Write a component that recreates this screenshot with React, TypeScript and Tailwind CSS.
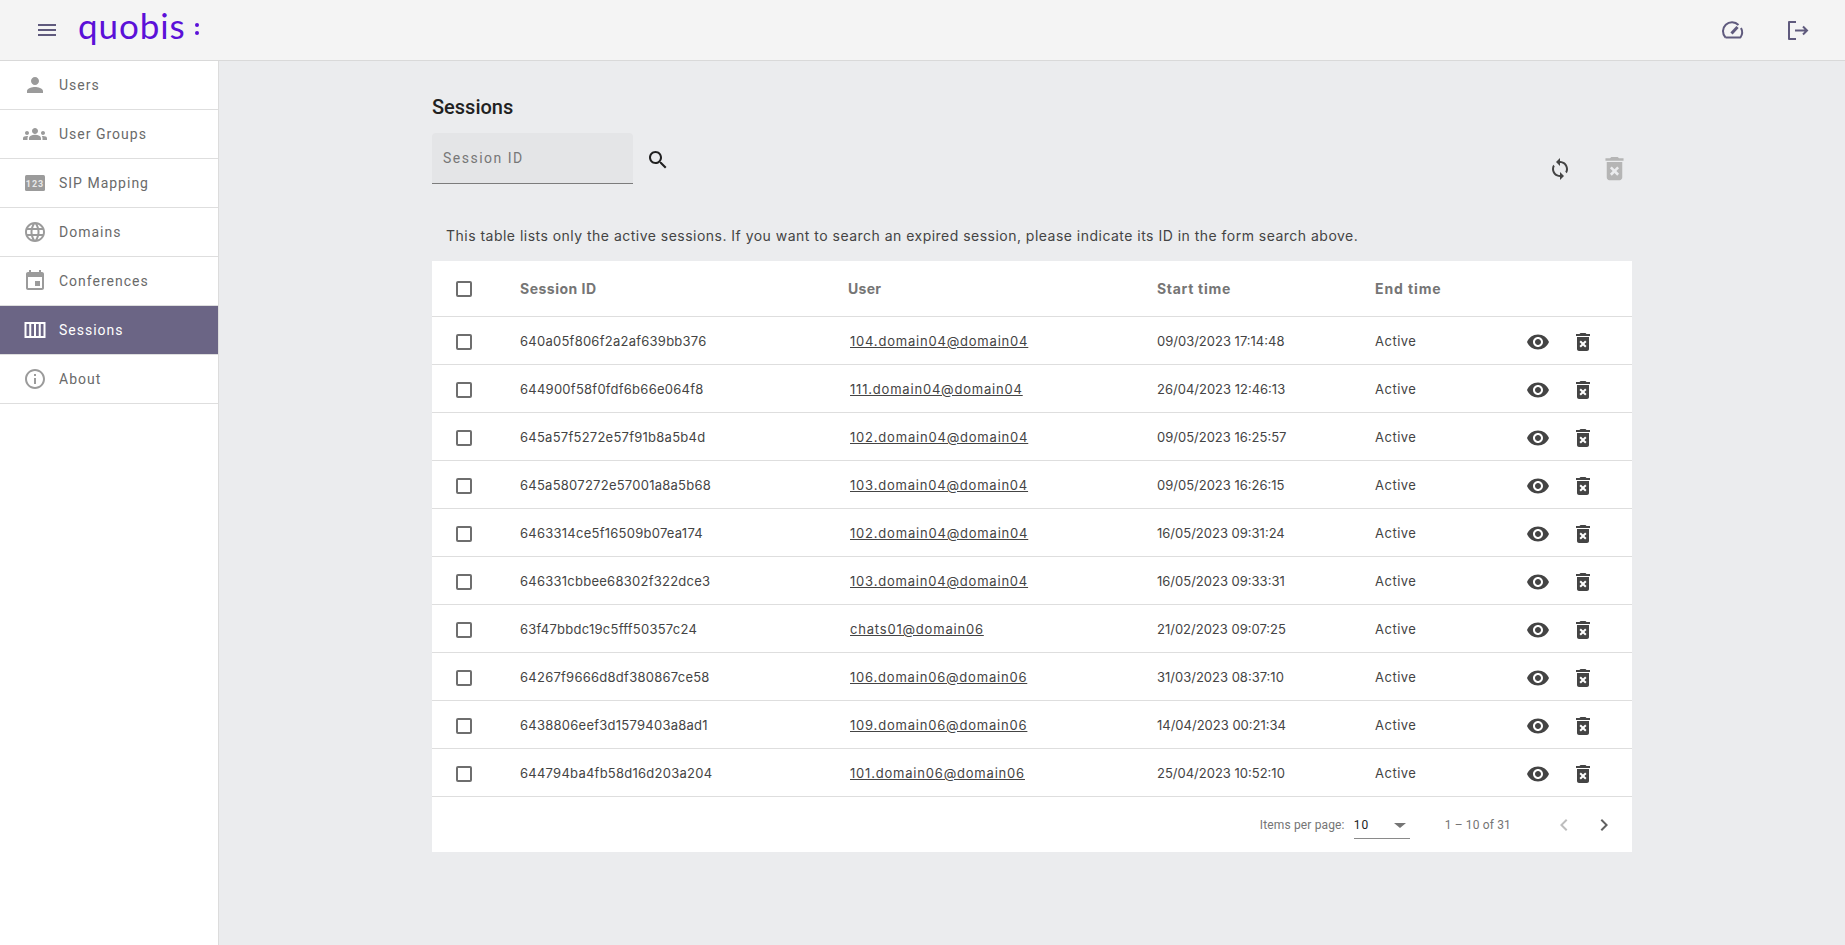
import React from "react";

const P = {
  person: "M12 12c2.21 0 4-1.79 4-4s-1.79-4-4-4-4 1.79-4 4 1.79 4 4 4zm0 2c-2.67 0-8 1.34-8 4v2h16v-2c0-2.66-5.33-4-8-4z",
  groups: "M12 12.75c1.63 0 3.07.39 4.24.9 1.08.48 1.76 1.56 1.76 2.73V18H6v-1.61c0-1.18.68-2.26 1.76-2.73 1.17-.52 2.61-.91 4.24-.91zM4 13c1.1 0 2-.9 2-2s-.9-2-2-2-2 .9-2 2 .9 2 2 2zm1.13 1.1c-.37-.06-.74-.1-1.13-.1-.99 0-1.93.21-2.78.58C.48 14.9 0 15.62 0 16.43V18h4.5v-1.61c0-.83.23-1.61.63-2.29zM20 13c1.1 0 2-.9 2-2s-.9-2-2-2-2 .9-2 2 .9 2 2 2zm4 3.43c0-.81-.48-1.53-1.22-1.85-.85-.37-1.79-.58-2.78-.58-.39 0-.76.04-1.13.1.4.68.63 1.46.63 2.29V18H24v-1.57zM12 6c1.66 0 3 1.34 3 3s-1.34 3-3 3-3-1.34-3-3 1.34-3 3-3z",
  language: "M11.99 2C6.47 2 2 6.48 2 12s4.47 10 9.99 10C17.52 22 22 17.52 22 12S17.52 2 11.99 2zm6.93 6h-2.95c-.32-1.25-.78-2.45-1.38-3.56 1.84.63 3.37 1.91 4.33 3.56zM12 4.04c.83 1.2 1.48 2.53 1.91 3.96h-3.82c.43-1.43 1.08-2.76 1.91-3.96zM4.26 14C4.1 13.36 4 12.69 4 12s.1-1.36.26-2h3.38c-.08.66-.14 1.32-.14 2 0 .68.06 1.34.14 2H4.26zm.82 2h2.95c.32 1.25.78 2.45 1.38 3.56-1.84-.63-3.37-1.9-4.33-3.56zm2.95-8H5.08c.96-1.66 2.49-2.93 4.33-3.56C8.81 5.55 8.35 6.75 8.03 8zM12 19.96c-.83-1.2-1.48-2.53-1.91-3.96h3.82c-.43 1.43-1.08 2.76-1.91 3.96zM14.34 14H9.66c-.09-.66-.16-1.32-.16-2 0-.68.07-1.35.16-2h4.68c.09.65.16 1.32.16 2 0 .68-.07 1.34-.16 2zm.25 5.56c.6-1.11 1.06-2.31 1.38-3.56h2.95c-.96 1.65-2.49 2.93-4.33 3.56zM16.36 14c.08-.66.14-1.32.14-2 0-.68-.06-1.34-.14-2h3.38c.16.64.26 1.31.26 2s-.1 1.36-.26 2h-3.38z",
  event: "M17 12h-5v5h5v-5zM16 1v2H8V1H6v2H5c-1.11 0-1.99.9-1.99 2L3 19c0 1.1.89 2 2 2h14c1.1 0 2-.9 2-2V5c0-1.1-.9-2-2-2h-1V1h-2zm3 18H5V8h14v11z",
  columns: "M1.5 4h21v16h-21V4zM3.5 6v12h2.75V6H3.5zM8.25 6v12H11V6H8.25zM13 6v12h2.75V6H13zM17.75 6v12h2.75V6h-2.75z",
  info: "M11 7h2v2h-2zm0 4h2v6h-2zm1-9C6.48 2 2 6.48 2 12s4.48 10 10 10 10-4.48 10-10S17.52 2 12 2zm0 18c-4.41 0-8-3.59-8-8s3.59-8 8-8 8 3.59 8 8-3.59 8-8 8z",
  search: "M15.5 14h-.79l-.28-.27C15.41 12.59 16 11.11 16 9.5 16 5.91 13.09 3 9.5 3S3 5.91 3 9.5 5.91 16 9.5 16c1.61 0 3.09-.59 4.23-1.57l.27.28v.79l5 4.99L20.49 19l-4.99-5zm-6 0C7.01 14 5 11.99 5 9.5S7.01 5 9.5 5 14 7.01 14 9.5 11.99 14 9.5 14z",
  sync: "M12 4V1L8 5l4 4V6c3.31 0 6 2.69 6 6 0 1.01-.25 1.97-.7 2.8l1.46 1.46C19.54 15.03 20 13.57 20 12c0-4.42-3.58-8-8-8zm0 14c-3.31 0-6-2.69-6-6 0-1.01.25-1.97.7-2.8L5.24 7.74C4.46 8.97 4 10.43 4 12c0 4.42 3.58 8 8 8v3l4-4-4-4v3z",
  del: "M6 19c0 1.1.9 2 2 2h8c1.1 0 2-.9 2-2V7H6v12zm2.46-7.12l1.41-1.41L12 12.59l2.12-2.12 1.41 1.41L13.41 14l2.12 2.12-1.41 1.41L12 15.41l-2.12 2.12-1.41-1.41L10.59 14l-2.13-2.12zM15.5 4l-1-1h-5l-1 1H5v2h14V4z",
  eye: "M12 4.5C7 4.5 2.73 7.61 1 12c1.73 4.39 6 7.5 11 7.5s9.27-3.11 11-7.5c-1.73-4.39-6-7.5-11-7.5zM12 17c-2.76 0-5-2.24-5-5s2.24-5 5-5 5 2.24 5 5-2.24 5-5 5zm0-8c-1.66 0-3 1.34-3 3s1.34 3 3 3 3-1.34 3-3-1.34-3-3-3z",
  menu: "M3 18h18v-2H3v2zm0-5h18v-2H3v2zm0-7v2h18V6H3z",
  left: "M15.41 7.41L14 6l-6 6 6 6 1.41-1.41L10.83 12z",
  right: "M10 6L8.59 7.41 13.17 12l-4.58 4.59L10 18l6-6z",
};

function Icon({ d, className }: { d: string; className: string }) {
  return (
    <svg viewBox="0 0 24 24" fill="currentColor" fillRule="evenodd" className={className}>
      <path d={d} />
    </svg>
  );
}

function Pin({ className }: { className: string }) {
  return (
    <svg viewBox="0 0 24 24" className={className}>
      <rect x="2" y="4" width="20" height="16" rx="1.5" fill="currentColor" />
      <text x="12" y="15.5" textAnchor="middle" fontSize="9" fontWeight="700" fill="#e8e8e8" fontFamily="Roboto, sans-serif">123</text>
    </svg>
  );
}

const nav = [
  { label: "Users", d: P.person },
  { label: "User Groups", d: P.groups },
  { label: "SIP Mapping", d: "" },
  { label: "Domains", d: P.language },
  { label: "Conferences", d: P.event },
  { label: "Sessions", d: P.columns, active: true },
  { label: "About", d: P.info },
];

const rows = [
  ["640a05f806f2a2af639bb376", "104.domain04@domain04", "09/03/2023 17:14:48"],
  ["644900f58f0fdf6b66e064f8", "111.domain04@domain04", "26/04/2023 12:46:13"],
  ["645a57f5272e57f91b8a5b4d", "102.domain04@domain04", "09/05/2023 16:25:57"],
  ["645a5807272e57001a8a5b68", "103.domain04@domain04", "09/05/2023 16:26:15"],
  ["6463314ce5f16509b07ea174", "102.domain04@domain04", "16/05/2023 09:31:24"],
  ["646331cbbee68302f322dce3", "103.domain04@domain04", "16/05/2023 09:33:31"],
  ["63f47bbdc19c5fff50357c24", "chats01@domain06", "21/02/2023 09:07:25"],
  ["64267f9666d8df380867ce58", "106.domain06@domain06", "31/03/2023 08:37:10"],
  ["6438806eef3d1579403a8ad1", "109.domain06@domain06", "14/04/2023 00:21:34"],
  ["644794ba4fb58d16d203a204", "101.domain06@domain06", "25/04/2023 10:52:10"],
];

const Box = () => <div className="h-4 w-4 rounded-[2px] border-2 border-[#6e6e6e]" />;

export default function App() {
  return (
    <div className="flex h-screen w-full flex-col overflow-hidden bg-[#ebecee] font-['Roboto',sans-serif]">
      <header className="flex h-[61px] shrink-0 items-center border-b border-[#d9d9d9] bg-[#f4f4f4]">
        <Icon d={P.menu} className="ml-[35px] h-6 w-6 text-[#5f5a7d]" />
        <div className="ml-[19px] flex items-center">
          <span className="mt-[-9px] font-['Lato',sans-serif] text-[35px] leading-none tracking-[0.9px] text-[#5b10d8]">quobis</span>
          <span className="ml-[9px] mt-[-3px] flex flex-col gap-[4px]">
            <span className="h-[4px] w-[4px] rounded-full bg-[#5b10d8]" />
            <span className="h-[4px] w-[4px] rounded-full bg-[#5b10d8]" />
          </span>
        </div>
        <div className="ml-auto mr-[36px] flex items-center gap-[40px] text-[#5f5a7d]">
          <svg viewBox="0 0 24 24" fill="none" stroke="currentColor" strokeWidth="2" className="h-6 w-6">
            <path d="M4.5 19.5a9 9 0 0 1 13-12.5M20 10a9 9 0 0 1-.6 9.5H4.5" strokeLinejoin="round" />
            <path d="M10.5 15.5 L16.5 9" strokeWidth="3" />
          </svg>
          <svg viewBox="0 0 24 24" fill="none" stroke="currentColor" strokeWidth="2" className="h-6 w-6">
            <path d="M11 4H4v17h7" strokeLinejoin="round" />
            <path d="M10 12.5h12M18 8.5l4 4-4 4" />
          </svg>
        </div>
      </header>
      <div className="flex min-h-0 flex-1">
        <aside className="w-[219px] shrink-0 border-r border-[#dcdcdc] bg-white">
          {nav.map((n) => (
            <div
              key={n.label}
              className={`flex h-[49px] items-center border-b border-[#dedede] text-[14px] tracking-[1px] ${
                n.active ? "bg-[#6b6585] text-white" : "text-[#6a6a6a]"
              }`}
            >
              <div className={`flex w-[59px] justify-center pl-[11px] ${n.active ? "text-white" : "text-[#9b9b9b]"}`}>
                {n.d ? <Icon d={n.d} className="h-6 w-6" /> : <Pin className="h-6 w-6" />}
              </div>
              <span>{n.label}</span>
            </div>
          ))}
        </aside>
        <main className="min-w-0 flex-1 pl-[213px] pt-[34px]">
          <div className="w-[1200px]">
            <h1 className="h-[38px] text-[20px] font-medium leading-[24px] text-[#212121]">Sessions</h1>
            <div className="flex h-[51px] items-start">
              <div className="flex h-[51px] w-[201px] items-center rounded-t-[4px] border-b border-[#7c7c7c] bg-[#e4e5e7] pl-[11px] text-[14px] tracking-[1.5px] text-[#777777]">
                Session ID
              </div>
              <Icon d={P.search} className="ml-[13px] mt-[15px] h-6 w-6 text-[#212121]" />
              <div className="ml-auto mr-[2px] mt-[20px] flex items-center gap-[27px]">
                <Icon d={P.sync} className="h-6 w-6 text-[#444444]" />
                <Icon d={P.del} className="h-[31px] w-[31px] text-[#b5b5b5]" />
              </div>
            </div>
            <p className="mt-[42px] h-[35px] pl-[14px] font-['Inter',sans-serif] text-[14px] leading-[20px] tracking-[0.48px] text-[#444444]">
              This table lists only the active sessions. If you want to search an expired session, please indicate its ID in the form search above.
            </p>
            <div className="bg-white">
              <div className="flex h-[56px] items-center border-b border-[#dedede] font-['Inter',sans-serif] text-[14px] font-bold text-[#757575]">
                <div className="w-[88px] pl-[24px]"><Box /></div>
                <div className="w-[328px] tracking-[0.5px]">Session ID</div>
                <div className="w-[309px] tracking-[0.3px]">User</div>
                <div className="w-[218px] tracking-[0.7px]">Start time</div>
                <div className="tracking-[0.9px]">End time</div>
              </div>
              {rows.map((r) => (
                <div key={r[0]} className="flex h-[48px] items-center border-b border-[#dedede] pt-[2px] font-['Inter',sans-serif] text-[13px] text-[#444444]">
                  <div className="w-[88px] pl-[24px]"><Box /></div>
                  <div className="w-[328px] tracking-[0.25px]">{r[0]}</div>
                  <div className="w-[309px] pl-[2px] tracking-[0.8px] underline">{r[1]}</div>
                  <div className="w-[218px]">{r[2]}</div>
                  <div className="w-[151px] tracking-[0.5px]">Active</div>
                  <Icon d={P.eye} className="h-6 w-6 text-[#444444]" />
                  <Icon d={P.del} className="ml-[21px] h-6 w-6 text-[#444444]" />
                </div>
              ))}
              <div className="flex h-[55px] items-center justify-end text-[12px] tracking-[0.15px] text-[#757575]">
                <span>Items per page:</span>
                <div className="ml-[9px] flex h-[28px] w-[56px] items-center justify-between border-b border-[#8a8a8a] pt-[2px] pr-[4px] text-[#212121]">
                  <span className="tracking-[1px]">10</span>
                  <span className="h-0 w-0 border-x-[6px] border-t-[5px] border-x-transparent border-t-[#757575]" />
                </div>
                <span className="ml-[35px] mr-[41px]">1 – 10 of 31</span>
                <Icon d={P.left} className="mt-[1px] h-6 w-6 text-[#bdbdbd]" />
                <Icon d={P.right} className="ml-[16px] mr-[16px] mt-[1px] h-6 w-6 text-[#616161]" />
              </div>
            </div>
          </div>
        </main>
      </div>
    </div>
  );
}
